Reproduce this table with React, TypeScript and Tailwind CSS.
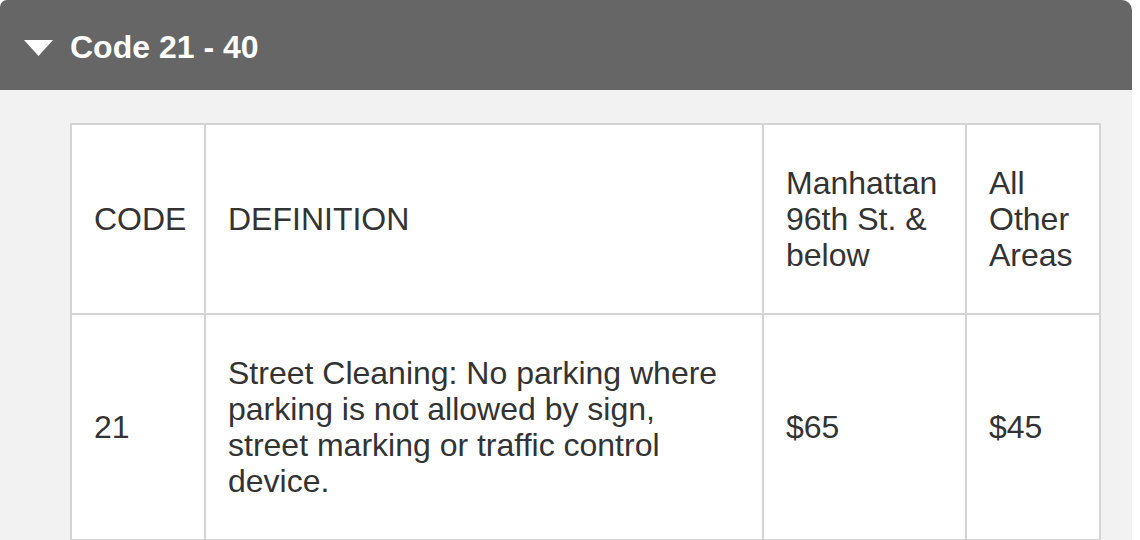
import React from "react";

const cell = "bg-white flex items-center px-[22px] py-[40px] text-[32px] leading-[36px] text-[#333333]";

export default function App() {
  return (
    <div className="w-[1132px] h-[540px] overflow-hidden" style={{ fontFamily: '"Liberation Sans", Arial, Helvetica, sans-serif' }}>
      <div className="bg-[#666666] h-[90px] rounded-tl-[7px] rounded-tr-[10px] flex items-center pl-[24px] pt-[4px]">
        <svg width="29" height="16" viewBox="0 0 29 16" className="mt-[2px]">
          <polygon points="0,0 29,0 14.5,16" fill="#ffffff" />
        </svg>
        <span className="ml-[17px] text-white font-bold text-[32px] leading-none">Code 21 - 40</span>
      </div>
      <div className="bg-[#f2f2f2] h-[450px] pl-[70px] pt-[33px]">
        <div className="grid grid-cols-[132px_556px_201px_132px] gap-[2px] p-[2px] bg-[#d4d4d4] w-max">
          <div className={cell}>CODE</div>
          <div className={cell}>DEFINITION</div>
          <div className={cell}>Manhattan 96th St. &amp; below</div>
          <div className={cell}>All Other Areas</div>
          <div className={cell}>21</div>
          <div className={cell}>Street Cleaning: No parking where parking is not allowed by sign, street marking or traffic control device.</div>
          <div className={cell}>$65</div>
          <div className={cell}>$45</div>
        </div>
      </div>
    </div>
  );
}
